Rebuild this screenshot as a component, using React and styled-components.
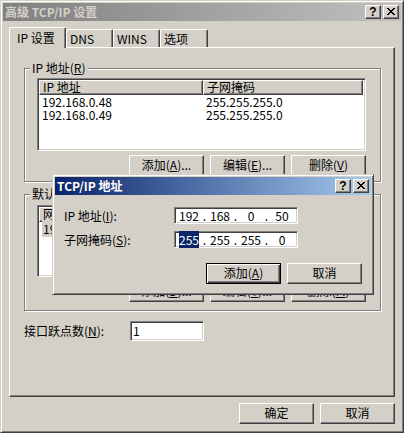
import React from 'react';
import styled, { createGlobalStyle, css } from 'styled-components';

const FACE = '#d4d0c8';
const SHADOW = '#808080';
const DARK = '#404040';

const GlobalStyle = createGlobalStyle`
  html, body {
    margin: 0;
    padding: 0;
    background: ${FACE};
  }
  body {
    font-family: "Noto Sans CJK SC", "Liberation Sans", sans-serif;
    font-size: 12px;
    color: #000;
  }
  * {
    box-sizing: border-box;
  }
  u {
    text-underline-offset: 1px;
  }
`;

// classic 3D window frame
const frame = css`
  background: ${FACE};
  border: 1px solid;
  border-color: ${FACE} ${DARK} ${DARK} ${FACE};
  box-shadow: inset 1px 1px #fff, inset -1px -1px ${SHADOW};
  padding: 2px;
  display: flex;
  flex-direction: column;
`;

const raised = css`
  border: 1px solid;
  border-color: #fff ${DARK} ${DARK} #fff;
  box-shadow: inset -1px -1px ${SHADOW};
`;

const sunken = css`
  border: 1px solid;
  border-color: ${SHADOW} #fff #fff ${SHADOW};
  box-shadow: inset 1px 1px ${DARK}, inset -1px -1px ${FACE};
`;

const Window = styled.div`
  ${frame}
  position: relative;
  width: 404px;
  height: 433px;
`;

const Dialog = styled.div`
  ${frame}
  position: absolute;
  left: 51px;
  top: 173px;
  width: 322px;
  height: 121px;
  z-index: 5;
`;

const TitleBar = styled.div`
  height: 18px;
  flex: none;
  display: flex;
  align-items: center;
  padding: 0 2px;
  background: ${({ $active }) =>
    $active
      ? 'linear-gradient(to right, #0a246a, #a6caf0)'
      : 'linear-gradient(to right, #808080, #c0c0c0)'};
`;

const TitleText = styled.div`
  flex: 1;
  font-weight: bold;
  line-height: 18px;
  white-space: nowrap;
  color: ${({ $active }) => ($active ? '#fff' : FACE)};
`;

const CaptionButton = styled.div`
  ${raised}
  width: 16px;
  height: 14px;
  background: ${FACE};
  display: flex;
  align-items: center;
  justify-content: center;
  margin-left: ${({ $gap }) => ($gap ? '2px' : '0')};
  font-family: "Liberation Sans", sans-serif;
  font-weight: bold;
  font-size: 12px;
  line-height: 12px;
  padding-bottom: 1px;
`;

const CloseGlyph = () => {
  const rows = [0, 1, 2, 3, 4, 5, 6];
  return (
    <svg width="8" height="7" viewBox="0 0 8 7" shapeRendering="crispEdges">
      {rows.map((r) => {
        const a = r <= 3 ? r : 6 - r;
        return (
          <g key={r} fill="#000">
            <rect x={a} y={r} width="2" height="1" />
            <rect x={6 - a} y={r} width="2" height="1" />
          </g>
        );
      })}
    </svg>
  );
};

const Content = styled.div`
  flex: 1;
  display: flex;
  flex-direction: column;
  padding: 6px 6px 0 6px;
`;

const TabStrip = styled.div`
  height: 20px;
  display: flex;
  align-items: flex-end;
  position: relative;
  z-index: 1;
`;

const Tab = styled.div`
  width: ${({ $w }) => $w}px;
  height: ${({ $selected }) => ($selected ? 21 : 18)}px;
  margin-bottom: ${({ $selected }) => ($selected ? '-1px' : '0')};
  padding: ${({ $selected }) => ($selected ? '3px 0 0 7px' : '2px 0 0 3px')};
  background: ${FACE};
  border-top: 1px solid #fff;
  border-left: 1px solid #fff;
  border-right: 1px solid ${DARK};
  border-radius: 2px 2px 0 0;
  box-shadow: inset -1px 0 ${SHADOW};
  line-height: 13px;
  white-space: nowrap;
`;

const TabPanel = styled.div`
  width: 386px;
  height: 350px;
  flex: none;
  border: 1px solid;
  border-color: #fff ${DARK} ${DARK} #fff;
  box-shadow: inset -1px -1px ${SHADOW};
  padding: 20px 0 0 14px;
  display: flex;
  flex-direction: column;
`;

const GroupBox = styled.div`
  position: relative;
  width: 357px;
  height: ${({ $h }) => $h}px;
  margin-top: ${({ $mt }) => $mt || 0}px;
  border: 1px solid ${SHADOW};
  box-shadow: 1px 1px 0 #fff, inset 1px 1px 0 #fff;
  padding: ${({ $pt }) => $pt}px 14px 0 12px;
  display: flex;
  flex-direction: column;
`;

const Legend = styled.div`
  position: absolute;
  top: -8px;
  left: 5px;
  padding: 0 2px;
  background: ${FACE};
  line-height: 14px;
  white-space: nowrap;
`;

const ListView = styled.div`
  ${sunken}
  width: 100%;
  height: ${({ $h }) => $h}px;
  background: #fff;
  padding: 1px;
  overflow: hidden;
`;

const HeaderRow = styled.div`
  display: flex;
  height: 15px;
`;

const HeaderCell = styled.div`
  ${raised}
  width: ${({ $w }) => $w}px;
  height: 15px;
  background: ${FACE};
  padding-left: 3px;
  line-height: 12px;
  white-space: nowrap;
`;

const Row = styled.div`
  display: flex;
  height: 13px;
  line-height: 13px;
`;

const Cell = styled.div`
  width: ${({ $w }) => $w}px;
  padding-left: 3px;
  white-space: nowrap;
`;

const Selected = styled.span`
  background: ${FACE};
  padding: 0 1px;
`;

const ButtonRow = styled.div`
  display: flex;
  justify-content: flex-end;
  gap: ${({ $gap }) => $gap || 6}px;
  margin-top: ${({ $mt }) => $mt || 0}px;
`;

const Button = styled.div`
  ${raised}
  width: 75px;
  height: 21px;
  background: ${FACE};
  text-align: center;
  line-height: 18px;
  white-space: nowrap;
  ${({ $default }) =>
    $default &&
    css`
      border-color: #000;
      box-shadow: inset 1px 1px #fff, inset -1px -1px ${DARK}, inset -2px -2px ${SHADOW};
    `}
`;

const FieldRow = styled.div`
  display: flex;
  align-items: center;
  margin-top: ${({ $mt }) => $mt || 0}px;
`;

const FieldLabel = styled.div`
  width: ${({ $w }) => $w}px;
  line-height: 14px;
  white-space: nowrap;
`;

const TextBox = styled.div`
  ${sunken}
  width: ${({ $w }) => $w}px;
  height: ${({ $h }) => $h}px;
  background: #fff;
  padding: 0 2px;
  line-height: ${({ $h }) => $h - 2}px;
  display: flex;
  align-items: center;
`;

const Octet = styled.div`
  width: 24px;
  text-align: center;
  line-height: 13px;
`;

const Dot = styled.div`
  width: 7px;
  text-align: center;
  line-height: 13px;
`;

const Highlight = styled.span`
  background: #0a246a;
  color: #fff;
`;

const DialogBody = styled.div`
  flex: 1;
  padding: 12px 9px 0 9px;
  display: flex;
  flex-direction: column;
`;

const Footer = styled.div`
  display: flex;
  justify-content: flex-end;
  gap: 6px;
  margin-top: 6px;
`;

const IpBox = ({ parts, select }) => (
  <TextBox $w={124} $h={17}>
    {parts.map((p, i) => (
      <React.Fragment key={i}>
        <Octet>{i === 0 && select ? <Highlight>{p}</Highlight> : p}</Octet>
        {i < 3 && <Dot>.</Dot>}
      </React.Fragment>
    ))}
  </TextBox>
);

const Caption = ({ title, active }) => (
  <TitleBar $active={active}>
    <TitleText $active={active}>{title}</TitleText>
    <CaptionButton>?</CaptionButton>
    <CaptionButton $gap>
      <CloseGlyph />
    </CaptionButton>
  </TitleBar>
);

const ipRows = [
  ['192.168.0.48', '255.255.255.0'],
  ['192.168.0.49', '255.255.255.0'],
];

export default function App() {
  return (
    <>
      <GlobalStyle />
      <Window>
        <Caption title="高级 TCP/IP 设置" />
        <Content>
          <TabStrip>
            <Tab $selected $w={57}>IP 设置</Tab>
            <Tab $w={47}>DNS</Tab>
            <Tab $w={47}>WINS</Tab>
            <Tab $w={48}>选项</Tab>
          </TabStrip>
          <TabPanel>
            <GroupBox $h={114} $pt={9}>
              <Legend>IP 地址(<u>R</u>)</Legend>
              <ListView $h={73}>
                <HeaderRow>
                  <HeaderCell $w={164}>IP 地址</HeaderCell>
                  <HeaderCell $w={160}>子网掩码</HeaderCell>
                </HeaderRow>
                {ipRows.map(([ip, mask]) => (
                  <Row key={ip}>
                    <Cell $w={164}>{ip}</Cell>
                    <Cell $w={160}>{mask}</Cell>
                  </Row>
                ))}
              </ListView>
              <ButtonRow $mt={4}>
                <Button>添加(<u>A</u>)...</Button>
                <Button>编辑(<u>E</u>)...</Button>
                <Button>删除(<u>V</u>)</Button>
              </ButtonRow>
            </GroupBox>

            {/* gateway group: mostly hidden under the TCP/IP dialog */}
            <GroupBox $h={117} $pt={10} $mt={12}>
              <Legend>默认网关(<u>F</u>):</Legend>
              <ListView $h={72}>
                <HeaderRow>
                  <HeaderCell $w={164}>网关</HeaderCell>
                  <HeaderCell $w={160} />
                </HeaderRow>
                <Row>
                  <Cell $w={164}>
                    <Selected>192.168.0.1</Selected>
                  </Cell>
                </Row>
              </ListView>
              <ButtonRow $mt={4}>
                <Button>添加(<u>D</u>)...</Button>
                <Button>编辑(<u>T</u>)...</Button>
                <Button>删除(<u>M</u>)</Button>
              </ButtonRow>
            </GroupBox>

            <FieldRow $mt={10}>
              <FieldLabel $w={106}>接口跃点数(<u>N</u>):</FieldLabel>
              <TextBox $w={74} $h={20}>1</TextBox>
            </FieldRow>
          </TabPanel>
          <Footer>
            <Button>确定</Button>
            <Button>取消</Button>
          </Footer>
        </Content>

        <Dialog>
          <Caption title="TCP/IP 地址" active />
          <DialogBody>
            <FieldRow>
              <FieldLabel $w={110}>IP 地址(<u>I</u>):</FieldLabel>
              <IpBox parts={['192', '168', '0', '50']} />
            </FieldRow>
            <FieldRow $mt={7}>
              <FieldLabel $w={110}>子网掩码(<u>S</u>):</FieldLabel>
              <IpBox parts={['255', '255', '255', '0']} select />
            </FieldRow>
            <ButtonRow $mt={15}>
              <Button $default>添加(<u>A</u>)</Button>
              <Button>取消</Button>
            </ButtonRow>
          </DialogBody>
        </Dialog>
      </Window>
    </>
  );
}
